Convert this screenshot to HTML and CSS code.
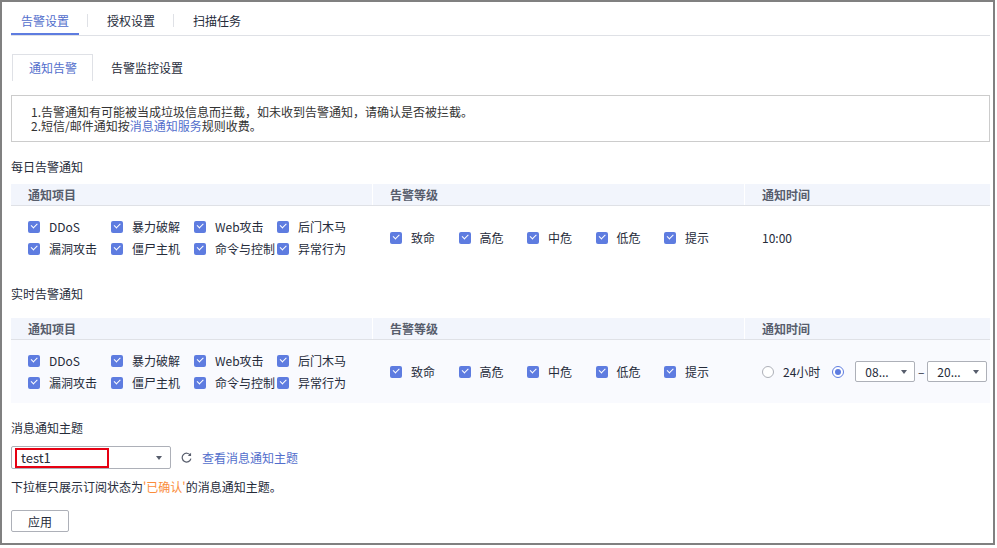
FILE: index.html
```html
<!DOCTYPE html>
<html lang="zh-CN">
<head>
    <meta charset="UTF-8">
    <meta name="viewport" content="width=device-width, initial-scale=1.0">
    <title>告警设置</title>
    <link rel="stylesheet" href="styles.css">
</head>
<body>
    <div class="frame">
        <div class="tabs">
            <a class="tab active">告警设置</a>
            <span class="tab-sep"></span>
            <a class="tab">授权设置</a>
            <span class="tab-sep"></span>
            <a class="tab">扫描任务</a>
        </div>

        <div class="sub-tabs">
            <a class="sub-tab active">通知告警</a>
            <a class="sub-tab">告警监控设置</a>
        </div>

        <div class="notice">
            <p>1.告警通知有可能被当成垃圾信息而拦截，如未收到告警通知，请确认是否被拦截。</p>
            <p>2.短信/邮件通知按<a class="link">消息通知服务</a>规则收费。</p>
        </div>

        <!-- daily -->
        <div class="section-title">每日告警通知</div>
        <div class="table">
            <div class="thead">
                <div class="th">通知项目</div>
                <div class="th">告警等级</div>
                <div class="th">通知时间</div>
            </div>
            <div class="trow">
                <div class="items">
                    <label class="check"><i></i>DDoS</label>
                    <label class="check"><i></i>暴力破解</label>
                    <label class="check"><i></i>Web攻击</label>
                    <label class="check"><i></i>后门木马</label>
                    <label class="check"><i></i>漏洞攻击</label>
                    <label class="check"><i></i>僵尸主机</label>
                    <label class="check"><i></i>命令与控制</label>
                    <label class="check"><i></i>异常行为</label>
                </div>
                <div class="levels">
                    <label class="check"><i></i>致命</label>
                    <label class="check"><i></i>高危</label>
                    <label class="check"><i></i>中危</label>
                    <label class="check"><i></i>低危</label>
                    <label class="check"><i></i>提示</label>
                </div>
                <div class="time">10:00</div>
            </div>
        </div>

        <!-- realtime -->
        <div class="section-title">实时告警通知</div>
        <div class="table realtime">
            <div class="thead">
                <div class="th">通知项目</div>
                <div class="th">告警等级</div>
                <div class="th">通知时间</div>
            </div>
            <div class="trow">
                <div class="items">
                    <label class="check"><i></i>DDoS</label>
                    <label class="check"><i></i>暴力破解</label>
                    <label class="check"><i></i>Web攻击</label>
                    <label class="check"><i></i>后门木马</label>
                    <label class="check"><i></i>漏洞攻击</label>
                    <label class="check"><i></i>僵尸主机</label>
                    <label class="check"><i></i>命令与控制</label>
                    <label class="check"><i></i>异常行为</label>
                </div>
                <div class="levels">
                    <label class="check"><i></i>致命</label>
                    <label class="check"><i></i>高危</label>
                    <label class="check"><i></i>中危</label>
                    <label class="check"><i></i>低危</label>
                    <label class="check"><i></i>提示</label>
                </div>
                <div class="time">
                    <label class="radio"><i></i>24小时</label>
                    <label class="radio on"><i></i></label>
                    <div class="mini-select">08...<span class="caret"></span></div>
                    <span class="dash">–</span>
                    <div class="mini-select">20...<span class="caret"></span></div>
                </div>
            </div>
        </div>

        <div class="section-title">消息通知主题</div>
        <div class="topic-row">
            <div class="topic-select">
                <span class="marked">test1</span>
                <span class="caret"></span>
            </div>
            <a class="refresh">
                <svg width="11" height="11" viewBox="0 0 12 12">
                    <path d="M10.2 3.6A4.8 4.8 0 1 0 10.8 7.2" fill="none" stroke="#575d6c" stroke-width="1.3"/>
                    <path d="M11 0.8V4.4H7.4Z" fill="#575d6c"/>
                </svg>
            </a>
            <a class="link">查看消息通知主题</a>
        </div>
        <div class="hint">下拉框只展示订阅状态为<span class="warn">'已确认'</span>的消息通知主题。</div>

        <button class="btn">应用</button>
    </div>
</body>
</html>
```

FILE: styles.css
```css
body {
    margin: 0;
    padding: 0;
    font-family: "Noto Sans CJK SC", "Liberation Sans", sans-serif;
    font-size: 12px;
    color: #252b3a;
    background: #ffffff;
}
.frame {
    width: 995px;
    height: 545px;
    box-sizing: border-box;
    border: 2px solid #808080;
    padding: 0 3px 0 9px;
}

/* top tabs */
.tabs {
    display: flex;
    align-items: flex-start;
    border-bottom: 1px solid #dfe1e6;
}
.tab {
    padding: 10px 10px 3px;
    line-height: 18px;
    border-bottom: 2px solid transparent;
    color: #252b3a;
    cursor: pointer;
}
.tab.active {
    color: #526ecc;
    border-bottom-color: #5e7ce0;
}
.tab-sep {
    width: 1px;
    height: 13px;
    margin: 12px 9px 0 8px;
    background: #dfe1e6;
}

/* sub tabs */
.sub-tabs {
    display: flex;
    margin-top: 18px;
}
.sub-tab {
    line-height: 26px;
    padding: 1px 18px 0;
    color: #252b3a;
    cursor: pointer;
}
.sub-tab.active {
    margin-left: 1px;
    padding: 0 15px 0 16px;
    border: 1px solid #dfe1e6;
    border-bottom: none;
    color: #526ecc;
}

/* notice */
.notice {
    margin-top: 14px;
    border: 1px solid #cccccc;
    padding: 9px 19px 8px;
    line-height: 14px;
    color: #333333;
}
.notice p {
    margin: 0;
}
.link {
    color: #526ecc;
    cursor: pointer;
}

.section-title {
    margin-top: 16px;
    line-height: 18px;
    color: #252b3a;
}

/* tables */
.table {
    margin-top: 8px;
}
.table.realtime {
    margin-top: 15px;
}
.thead,
.trow {
    display: grid;
    grid-template-columns: 362px 372px 1fr;
}
.thead {
    background: #f2f5fc;
    border-bottom: 1px solid #dfe1e6;
}
.th {
    padding-left: 17px;
    line-height: 21px;
    font-weight: bold;
    color: #575d6c;
    border-right: 1px solid #ffffff;
}
.th:last-child {
    border-right: none;
}
.trow {
    height: 63px;
    align-items: center;
}
.realtime .trow {
    background: #f9fafe;
}
.items {
    display: grid;
    grid-template-columns: repeat(4, 83px);
    padding-left: 17px;
}
.levels {
    display: flex;
    padding-left: 17px;
}
.levels .check {
    width: 68.5px;
}
.time {
    display: flex;
    align-items: center;
    padding-left: 17px;
}

.check {
    display: flex;
    align-items: center;
    gap: 9px;
    line-height: 22px;
    white-space: nowrap;
}
.check i {
    position: relative;
    width: 12px;
    height: 12px;
    flex: none;
    border-radius: 2px;
    background: #5e7ce0;
}
.check i::after {
    content: "";
    position: absolute;
    left: 3px;
    top: 2.5px;
    width: 5px;
    height: 2.5px;
    border-left: 1.6px solid #ffffff;
    border-bottom: 1.6px solid #ffffff;
    transform: rotate(-45deg);
}

.radio {
    display: flex;
    align-items: center;
    gap: 9px;
    line-height: 22px;
}
.radio i {
    position: relative;
    width: 12px;
    height: 12px;
    box-sizing: border-box;
    border: 1px solid #adb0b8;
    border-radius: 50%;
    background: #ffffff;
}
.radio.on {
    margin-left: 12px;
    margin-right: 11px;
}
.radio.on i {
    border-color: #5e7ce0;
}
.radio.on i::after {
    content: "";
    position: absolute;
    left: 2px;
    top: 2px;
    width: 6px;
    height: 6px;
    border-radius: 50%;
    background: #5e7ce0;
}

.mini-select {
    position: relative;
    width: 60px;
    height: 21px;
    box-sizing: border-box;
    border: 1px solid #adb0b8;
    border-radius: 2px;
    padding-left: 9px;
    line-height: 19px;
    background: #ffffff;
}
.caret {
    position: absolute;
    right: 7px;
    top: 50%;
    margin-top: -2px;
    border-left: 3.5px solid transparent;
    border-right: 3.5px solid transparent;
    border-top: 4px solid #575d6c;
}
.dash {
    width: 12px;
    text-align: center;
}

/* topic */
.topic-row {
    display: flex;
    align-items: center;
    margin-top: 9px;
}
.topic-select {
    position: relative;
    width: 160px;
    height: 23px;
    box-sizing: border-box;
    border: 1px solid #adb0b8;
    border-radius: 2px;
    padding: 1px 0 0 3px;
}
.topic-select .caret {
    right: 8px;
}
.marked {
    display: block;
    width: 94px;
    height: 20px;
    box-sizing: border-box;
    border: 2px solid #e60012;
    padding-left: 4px;
    line-height: 16px;
    font-size: 13px;
}
.refresh {
    display: flex;
    margin: 0 10px 0 10px;
}
.hint {
    margin-top: 9px;
    line-height: 18px;
}
.warn {
    color: #fa8c3b;
}
.btn {
    display: block;
    margin-top: 14px;
    width: 58px;
    height: 22px;
    padding: 0;
    border: 1px solid #adb0b8;
    border-radius: 2px;
    background: #ffffff;
    font-family: inherit;
    font-size: 12px;
    color: #252b3a;
}
```
